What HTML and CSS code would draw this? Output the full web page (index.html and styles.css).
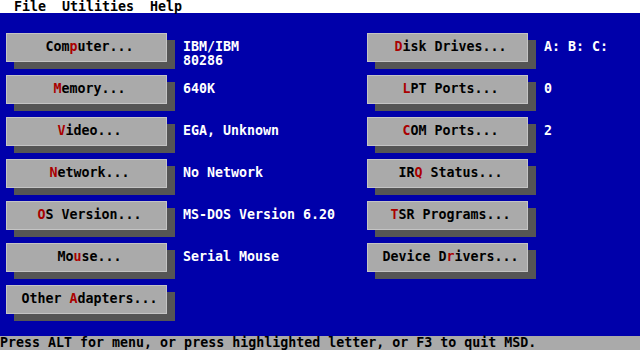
FILE: index.html
```html
<!DOCTYPE html>
<html lang="en">
<head>
    <meta charset="UTF-8">
    <title>Microsoft Diagnostics</title>
    <link rel="stylesheet" href="styles.css">
</head>
<body>
    <div class="menubar">
        <span>File</span>
        <span>Utilities</span>
        <span>Help</span>
    </div>

    <div class="main">
        <div class="column left">
            <div class="item">
                <div class="btn">Com<b>p</b>uter...</div>
                <div class="value">IBM/IBM<br>80286</div>
            </div>
            <div class="item">
                <div class="btn"><b>M</b>emory...</div>
                <div class="value">640K</div>
            </div>
            <div class="item">
                <div class="btn"><b>V</b>ideo...</div>
                <div class="value">EGA, Unknown</div>
            </div>
            <div class="item">
                <div class="btn"><b>N</b>etwork...</div>
                <div class="value">No Network</div>
            </div>
            <div class="item">
                <div class="btn"><b>O</b>S Version...</div>
                <div class="value">MS-DOS Version 6.20</div>
            </div>
            <div class="item">
                <div class="btn">Mo<b>u</b>se...</div>
                <div class="value">Serial Mouse</div>
            </div>
            <div class="item">
                <div class="btn">Other <b>A</b>dapters...</div>
                <div class="value"></div>
            </div>
        </div>

        <div class="column right">
            <div class="item">
                <div class="btn"><b>D</b>isk Drives...</div>
                <div class="value">A: B: C:</div>
            </div>
            <div class="item">
                <div class="btn"><b>L</b>PT Ports...</div>
                <div class="value">0</div>
            </div>
            <div class="item">
                <div class="btn"><b>C</b>OM Ports...</div>
                <div class="value">2</div>
            </div>
            <div class="item">
                <div class="btn">IR<b>Q</b> Status...</div>
                <div class="value"></div>
            </div>
            <div class="item">
                <div class="btn"><b>T</b>SR Programs...</div>
                <div class="value"></div>
            </div>
            <div class="item">
                <div class="btn">Device D<b>r</b>ivers...</div>
                <div class="value"></div>
            </div>
        </div>
    </div>

    <div class="statusbar">Press ALT for menu, or press highlighted letter, or F3 to quit MSD.</div>
</body>
</html>
```

FILE: styles.css
```css
body {
    margin: 0;
    padding: 0;
    width: 640px;
    height: 350px;
    display: flex;
    flex-direction: column;
    background-color: #0000aa;
    font-family: "DejaVu Sans Mono", "Liberation Mono", monospace;
    font-size: 13.3px;
    font-weight: bold;
    line-height: 14px;
    overflow: hidden;
}
.menubar {
    height: 13px;
    background-color: #fff;
    color: #000;
    padding-left: 14px;
    display: flex;
    gap: 16px;
    line-height: 13px;
}
.main {
    flex: 1;
    display: flex;
    padding: 20px 0 0 6px;
}
.column {
    display: flex;
    flex-direction: column;
    gap: 13px;
}
.left {
    width: 361px;
}
.item {
    height: 29px;
    display: flex;
    align-items: flex-start;
    gap: 16px;
}
.btn {
    box-sizing: border-box;
    flex: none;
    width: 161px;
    height: 29px;
    padding: 6px 0 0 6px;
    text-align: center;
    white-space: pre;
    color: #000;
    background-color: #aaa;
    border: 1px solid #c4c4c4;
    box-shadow: 8px 7px 0 #555;
}
.btn b {
    color: #aa0000;
}
.value {
    padding-top: 7px;
    color: #fff;
    white-space: pre;
}
.statusbar {
    height: 14px;
    background-color: #aaa;
    color: #000;
    white-space: pre;
}
```
